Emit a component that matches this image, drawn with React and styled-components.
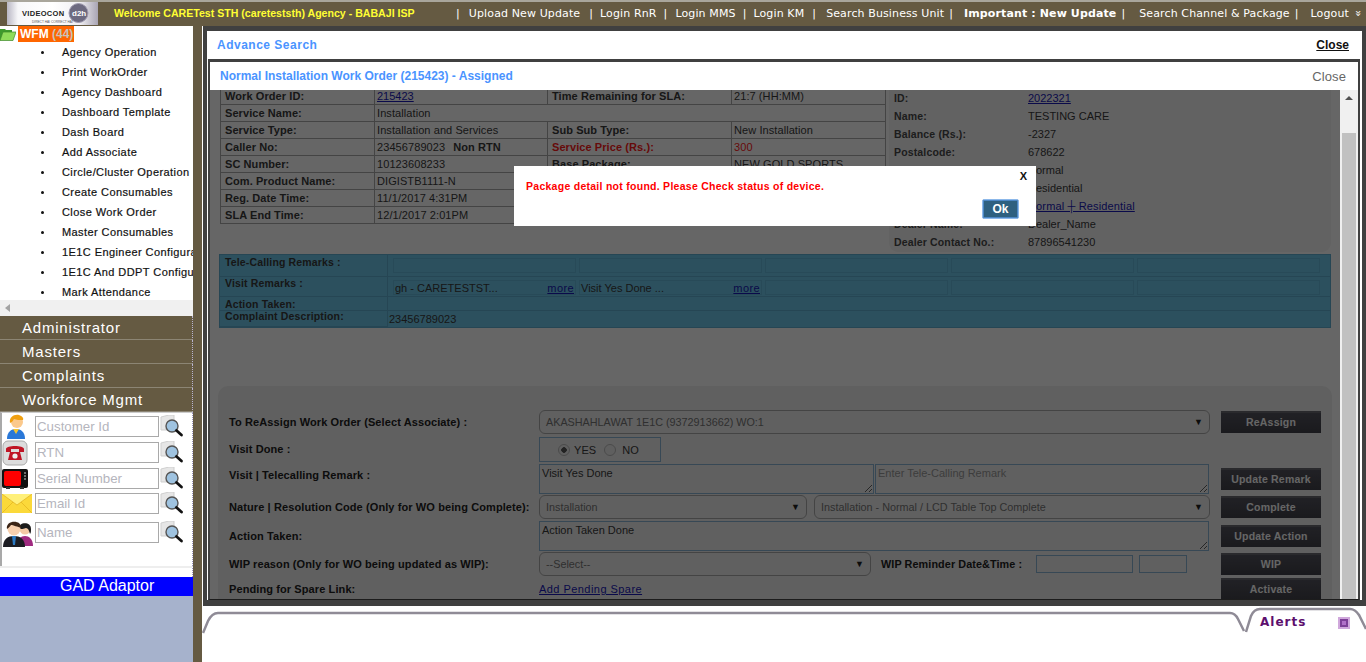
import styled, { createGlobalStyle } from "styled-components";

const GlobalStyle = createGlobalStyle`
  html, body {
    margin: 0;
    padding: 0;
    height: 100%;
    overflow: hidden;
    background: #fff;
  }
  * {
    box-sizing: border-box;
  }
`

const BROWN = "#655a42";
const ARIAL = `"Liberation Sans", Arial, sans-serif`;

const Page = styled.div`
  width: 1366px;
  height: 662px;
  display: flex;
  flex-direction: column;
  overflow: hidden;
  font-family: ${ARIAL};
  font-size: 11px;
  background: ${BROWN};
`

/* top bar */
const TopBar = styled.div`
  height: 26px;
  flex: none;
  display: flex;
  align-items: center;
  background: ${BROWN};
  border-top: 2px solid #a9a69c;
  padding: 0 0 2px 7px;
  color: #fff;
`

const Logo = styled.div`
  width: 91px;
  height: 23px;
  flex: none;
  margin-top: 1px;
  background: linear-gradient(90deg, #b9b7c4 0%, #f7f7f9 12%, #fff 50%, #f0eff3 80%, #a9a5b4 100%);
`

const Welcome = styled.div`
  margin-left: 16px;
  color: #ffff33;
  font-weight: bold;
  font-size: 10.6px;
  white-space: nowrap;
  width: 342px;
`

const Nav = styled.div`
  display: flex;
  align-items: center;
  font-family: "DejaVu Sans", sans-serif;
  font-size: 11px;
  letter-spacing: 0.12px;
  white-space: nowrap;
`

const NavItem = styled.span`
  margin-left: ${(p) => p.$left}px;
  font-weight: ${(p) => (p.$bold ? "bold" : "normal")};
  transform: ${(p) => (p.$turn ? "rotate(90deg)" : "none")};
`

/* body */
const Body = styled.div`
  flex: 1;
  min-height: 0;
  display: flex;
`

const Sidebar = styled.div`
  width: 193px;
  flex: none;
  display: flex;
  flex-direction: column;
  background: #a6b2cc;
`

const TreeHead = styled.div`
  height: 16px;
  flex: none;
  display: flex;
  align-items: center;
  background: #fff;
`

const WfmTag = styled.span`
  margin-left: 2px;
  width: 56px;
  height: 16px;
  line-height: 16px;
  padding-left: 2px;
  background: #ff6600;
  color: #fff;
  font-weight: bold;
  font-size: 12px;
`

const WfmCount = styled.span`
  color: #c9c2b8;
`

const TreeList = styled.ul`
  margin: 0;
  padding: 0;
  height: 258px;
  background: #fff;
  overflow: hidden;
  list-style: none;
  flex: none;
`

const TreeItem = styled.li`
  height: 20px;
  line-height: 20px;
  display: flex;
  white-space: nowrap;
  color: #111;
  font-size: 11px;
  letter-spacing: 0.42px;
  -webkit-text-stroke: 0.2px #111;
  &::before {
    content: "";
    flex: none;
    width: 3px;
    height: 3px;
    margin: 9px 18px 0 41px;
    border-radius: 50%;
    background: #111;
  }
`

const HScroll = styled.div`
  height: 16px;
  flex: none;
  display: flex;
  align-items: center;
  padding-left: 5px;
  background: #f0f0f0;
  &::before {
    content: "";
    border-style: solid;
    border-width: 4px 5px 4px 0;
    border-color: transparent #a3a3a3 transparent transparent;
  }
`

const AccordionHead = styled.div`
  height: 24px;
  flex: none;
  padding-left: 22px;
  line-height: 23px;
  background: ${BROWN};
  color: #fff;
  font-size: 15px;
  letter-spacing: 0.8px;
  border-bottom: 1px solid #8c8574;
  border-right: 1px dotted #b9b4d0;
  &:last-of-type {
    border-bottom: none;
  }
`

const SearchBox = styled.div`
  height: 154px;
  flex: none;
  padding-top: 3px;
  display: flex;
  flex-direction: column;
  gap: 5px;
  background: #fff;
  border-left: 2px solid #a9a9a9;
  border-right: 1px dotted #9a94c0;
  border-top: 1px solid #ccc;
`

const SearchRow = styled.div`
  height: 21px;
  display: flex;
  align-items: center;
  margin-top: ${(p) => p.$shift || 0}px;
`

const SearchIconCell = styled.div`
  width: 33px;
  flex: none;
  display: flex;
  padding-left: ${(p) => p.$pad || 0}px;
`

const SearchInput = styled.input`
  width: 124px;
  height: 21px;
  padding: 0 1px;
  border: 1px solid #a9a9a9;
  outline: none;
  font-family: ${ARIAL};
  font-size: 13.3px;
  &::placeholder {
    color: #b5b5bd;
    opacity: 1;
  }
`

const LensCell = styled.div`
  margin-left: 1px;
  width: 24px;
  height: 24px;
  flex: none;
`

const SearchFoot = styled.div`
  height: 11px;
  flex: none;
  background: #fff;
  border-top: 2px solid #eee;
  border-right: 1px dotted #9a94c0;
`

const GadBar = styled.div`
  height: 19px;
  flex: none;
  background: #0000ff;
  color: #fff;
  font-size: 16px;
  line-height: 18px;
  padding-left: 60px;
`

const Gutter = styled.div`
  width: 9px;
  flex: none;
  background: ${BROWN};
`

const Main = styled.div`
  flex: 1;
  min-width: 0;
  display: flex;
  flex-direction: column;
  background: #fff;
  padding-left: 1px;
`

const DarkArea = styled.div`
  height: 580px;
  flex: none;
  background: #404040;
  padding: 5px 4px 6px 4px;
`

const OuterPanel = styled.div`
  height: 569px;
  display: flex;
  flex-direction: column;
  background: #fff;
`

const OuterHead = styled.div`
  height: 28px;
  flex: none;
  display: flex;
  align-items: center;
  justify-content: space-between;
  padding: 0 13px 0 10px;
`

const BlueTitle = styled.span`
  color: #4a94ff;
  font-weight: bold;
  font-size: 12px;
  letter-spacing: ${(p) => p.$track}px;
`

const CloseLink = styled.a`
  color: #111;
  font-weight: bold;
  font-size: 12px;
  text-decoration: underline;
`

const Frame = styled.div`
  flex: 1;
  min-height: 0;
  margin: 0 2px 0 1px;
  display: flex;
  flex-direction: column;
  border: solid #404040;
  border-width: 3px 2px 1px 2px;
  border-bottom-color: #1c1c1c;
`

const FrameHead = styled.div`
  height: 28px;
  flex: none;
  display: flex;
  align-items: center;
  justify-content: space-between;
  padding: 0 12px 0 10px;
  background: #fff;
`

const GreyClose = styled.span`
  color: #666;
  font-size: 13px;
  letter-spacing: 0.1px;
`

const ScrollRow = styled.div`
  flex: 1;
  min-height: 0;
  display: flex;
`

const Pane = styled.div`
  position: relative;
  width: 1130px;
  flex: none;
  overflow: hidden;
  background: #fff;
`

const Dim = styled.div`
  position: absolute;
  inset: 0;
  background: rgba(0, 0, 0, 0.6);
`

const Modal = styled.div`
  position: absolute;
  left: 304px;
  top: 76px;
  width: 522px;
  height: 60px;
  background: #fff;
  padding: 14px 12px;
`

const ModalText = styled.div`
  color: #ff0000;
  font-weight: bold;
  font-size: 10.5px;
  letter-spacing: 0.27px;
`

const ModalX = styled.span`
  position: absolute;
  right: 9px;
  top: 4px;
  font-weight: bold;
  font-size: 11px;
  color: #111;
`

const OkButton = styled.button`
  position: absolute;
  left: 468px;
  top: 33px;
  width: 37px;
  height: 20px;
  padding: 0;
  background: #2e6080;
  border: 1px solid #8cb8ea;
  border-radius: 2px;
  box-shadow: inset 0 0 0 1px #4b86c4;
  color: #fff;
  font-family: ${ARIAL};
  font-weight: bold;
  font-size: 12px;
`

const Content = styled.div`
  margin-top: -3px;
`

const TopSection = styled.div`
  display: flex;
  align-items: flex-start;
  padding-left: 10px;
  gap: 3px;
`

const InfoTable = styled.table`
  width: 665px;
  border-collapse: collapse;
  table-layout: fixed;
  font-size: 11px;
  color: #3a3a3a;
  letter-spacing: 0.08px;
`

const Td = styled.td`
  height: 17px;
  padding: 0 0 0 ${(p) => (p.$label ? 4 : 2)}px;
  border: 1px solid #aaa;
  font-weight: ${(p) => (p.$label ? "bold" : "normal")};
  color: ${(p) => (p.$red ? "#ff1a1a" : "inherit")};
  white-space: nowrap;
  overflow: hidden;
`

const Strong = styled.b`
  margin-left: 8px;
`

const BlueLink = styled.a`
  color: #1a1ab8;
  text-decoration: underline;
  letter-spacing: ${(p) => p.$track || 0}px;
`

const CustomerPanel = styled.div`
  width: 442px;
  height: 165px;
  padding: 2px 0 0 5px;
  background: #f5f5f5;
  border-radius: 0 0 9px 9px;
  font-size: 11px;
  color: #3a3a3a;
`

const CustomerRow = styled.div`
  height: 18px;
  display: flex;
  align-items: center;
`

const CustomerLabel = styled.span`
  width: 134px;
  flex: none;
  font-weight: bold;
  color: #4a4a4a;
  font-size: 10.5px;
  letter-spacing: 0.15px;
`

const TealTable = styled.div`
  margin: 2px 0 0 9px;
  width: 1112px;
  height: 74px;
  background: #6ec8ea;
  border: 1px solid #5fb0d2;
  display: grid;
  grid-template-columns: 168px 1fr;
  grid-template-rows: 22px 20px 14px 16px;
  font-size: 11px;
  color: #3a3a3a;
`

const TealLabel = styled.div`
  padding-left: 5px;
  font-weight: bold;
  font-size: 10.5px;
  letter-spacing: 0.15px;
  border-right: 1px solid #5fb0d2;
  border-bottom: 1px solid #5fb0d2;
  line-height: ${(p) => p.$lh}px;
`

const TealCells = styled.div`
  padding: 3px 0 0 5px;
  display: grid;
  grid-template-columns: repeat(5, 183px);
  column-gap: 3px;
  border-bottom: 1px solid #5fb0d2;
`

const TealCell = styled.div`
  height: 15px;
  border: 1px solid #64b8dc;
  display: flex;
  justify-content: space-between;
  align-items: center;
  padding: 0 1px;
`

const TealPlain = styled.div`
  border-bottom: 1px solid ${(p) => (p.$last ? "transparent" : "#5fb0d2")};
  padding: 1px 0 0 1px;
  line-height: 14px;
`

const FormPanel = styled.div`
  margin: 58px 0 0 8px;
  width: 1114px;
  padding: 24px 0 0 11px;
  height: 240px;
  background: #f0f0f0;
  border-radius: 10px 10px 0 0;
  display: flex;
  gap: 11px;
`

const FormGrid = styled.div`
  width: 981px;
  flex: none;
  display: grid;
  grid-template-columns: 310px 1fr;
  grid-template-rows: 27px 27px 31px 26px 31px 28px 18px;
  color: #222;
  font-size: 11px;
  letter-spacing: 0.1px;
`

const FormLabel = styled.div`
  font-weight: bold;
  line-height: ${(p) => p.$lh}px;
  white-space: nowrap;
`

const FieldRow = styled.div`
  display: flex;
  align-items: ${(p) => (p.$center ? "center" : "flex-start")};
  gap: ${(p) => p.$gap || 0}px;
`

const SelectBox = styled.div`
  width: ${(p) => p.$w}px;
  height: 24px;
  flex: none;
  display: flex;
  align-items: center;
  justify-content: space-between;
  padding: 0 6px;
  margin-left: ${(p) => p.$left || 0}px;
  border: 1px solid #aaa;
  border-radius: 6px;
  background: #f0f0f0;
  color: #777;
  letter-spacing: 0;
  font-size: 10.8px;
`

const Caret = styled.span`
  color: #222;
  font-size: 9px;
`

const RadioBox = styled.div`
  width: 122px;
  height: 25px;
  display: flex;
  align-items: center;
  padding-left: 18px;
  border: 1px solid #8ab4d4;
  color: #3a3a3a;
`

const Radio = styled.input`
  appearance: none;
  margin: 0 ${(p) => p.$right || 4}px 0 0;
  width: 12px;
  height: 12px;
  border-radius: 50%;
  border: 1px solid #bbb;
  background: #eee;
  &:checked {
    background: radial-gradient(circle, #555 0 2.5px, #eee 3px);
  }
`

const RadioText = styled.span`
  margin-right: ${(p) => p.$right || 0}px;
`

const Area = styled.textarea`
  width: ${(p) => p.$w}px;
  height: 30px;
  flex: none;
  padding: 2px;
  margin: 0;
  border: 1px solid #8ab4d4;
  background: #f0f0f0;
  outline: none;
  font-family: ${ARIAL};
  font-size: 11px;
  color: #3a3a3a;
  &::placeholder {
    color: #999;
    opacity: 1;
  }
`

const WipLabel = styled.span`
  margin: 0 14px 0 10px;
  font-weight: bold;
  line-height: 24px;
  font-size: 10.8px;
  white-space: nowrap;
`

const DateInput = styled.input`
  width: ${(p) => p.$w}px;
  height: 18px;
  margin: 3px 6px 0 0;
  border: 1px solid #8ab4d4;
  background: #f0f0f0;
  outline: none;
`

const ButtonColumn = styled.div`
  width: 100px;
  flex: none;
  padding-top: 1px;
  display: flex;
  flex-direction: column;
`

const ActionButton = styled.button`
  width: 100px;
  height: 22px;
  flex: none;
  margin-top: ${(p) => p.$top || 0}px;
  padding: 0;
  border: none;
  box-shadow: inset 0 2px 0 #6a6a70;
  background: linear-gradient(#55555f, #42424a);
  color: #fff;
  font-family: ${ARIAL};
  font-weight: bold;
  font-size: 10.5px;
  letter-spacing: 0.2px;
`

const VScroll = styled.div`
  width: 18px;
  flex: none;
  display: flex;
  flex-direction: column;
  align-items: center;
  background: #f0f0f0;
`

const Arrow = styled.div`
  height: 16px;
  flex: none;
  display: flex;
  align-items: center;
  margin-top: ${(p) => p.$top || 0}px;
  &::before {
    content: "";
    border-style: solid;
    border-color: transparent;
    border-width: ${(p) => (p.$up ? "0 4px 4px 4px" : "4px 4px 0 4px")};
    border-bottom-color: ${(p) => (p.$up ? "#505050" : "transparent")};
    border-top-color: ${(p) => (p.$up ? "transparent" : "#505050")};
  }
`

const Thumb = styled.div`
  width: 14px;
  height: 466px;
  margin-top: 27px;
  flex: none;
  background: #c1c1c1;
`

/* footer tabs */
const Footer = styled.div`
  position: relative;
  flex: 1;
  background: #fff;
  margin-left: -1px;
`

const TabLine = styled.svg`
  display: block;
`

const AlertText = styled.span`
  position: absolute;
  left: 1058px;
  top: 9px;
  color: #5d0f6d;
  font-family: "DejaVu Sans", sans-serif;
  font-weight: bold;
  font-size: 12px;
  letter-spacing: 1px;
`

const AlertIcon = styled.span`
  position: absolute;
  left: 1136px;
  top: 11px;
  width: 12px;
  height: 12px;
  background: #b070c8;
  border: 2px solid #d0a8dc;
  box-shadow: inset 0 0 0 2px #7d3f98;
`

const menuItems = [
  "Agency Operation",
  "Print WorkOrder",
  "Agency Dashboard",
  "Dashboard Template",
  "Dash Board",
  "Add Associate",
  "Circle/Cluster Operation",
  "Create Consumables",
  "Close Work Order",
  "Master Consumables",
  "1E1C Engineer Configuration",
  "1E1C And DDPT Configuration",
  "Mark Attendance",
];

const navItems = [
  { text: "|", left: 0 },
  { text: "Upload New Update", left: 9 },
  { text: "|", left: 9 },
  { text: "Login RnR", left: 7 },
  { text: "|", left: 7 },
  { text: "Login MMS", left: 8 },
  { text: "|", left: 7 },
  { text: "Login KM", left: 7 },
  { text: "|", left: 8 },
  { text: "Search Business Unit", left: 10 },
  { text: "|", left: 5 },
  { text: "Important : New Update", left: 11, bold: true },
  { text: "|", left: 5 },
  { text: "Search Channel & Package", left: 14 },
  { text: "|", left: 5 },
  { text: "Logout", left: 12 },
  { text: "»", left: 6, turn: true },
];

const LogoArt = () => (
  <Logo>
    <svg width="91" height="23" viewBox="0 0 91 23">
      <text x="15" y="14" fontFamily="Liberation Sans" fontSize="7.5" fontWeight="bold" letterSpacing="0.3" fill="#222">VIDEOCON</text>
      <circle cx="71.5" cy="11" r="9.5" fill="#6d6a80" stroke="#a09cb0" />
      <text x="65" y="14" fontFamily="Liberation Sans" fontSize="8" fontWeight="bold" fill="#fff">d2h</text>
      <text x="25" y="21" fontFamily="Liberation Sans" fontSize="3.2" fill="#555">DIRECT HAI CORRECT HAI</text>
    </svg>
  </Logo>
);

const FolderIcon = () => (
  <svg width="16" height="14" viewBox="0 0 16 14">
    <path d="M0 2h5l1 1h6v3H3L1 13H0z" fill="#3e9a2c" />
    <path d="M3 5h13l-3 8.5H0z" fill="#8fdc5a" stroke="#3e8a2a" strokeWidth="0.7" />
  </svg>
);

const CustomerIcon = () => (
  <svg width="24" height="26" viewBox="0 0 24 26">
    <path d="M3 25c0-7 4-10 9-10s9 3 9 10z" fill="#2a78d8" />
    <path d="M9 15l3 5 3-5z" fill="#f4c430" />
    <circle cx="13" cy="8" r="6" fill="#fbc98c" />
    <path d="M6 9c-1-6 4-9 9-8 3 1 5 3 4 5-3 0-7 0-9-1-1 2-2 3-4 4z" fill="#f0a010" />
  </svg>
);

const PhoneIcon = () => (
  <svg width="26" height="26" viewBox="0 0 26 26">
    <rect x="1" y="1" width="24" height="24" rx="5" fill="#dcdcdc" stroke="#aaa" />
    <path d="M4 9c0-4 18-4 18 0v3h-5V9H9v3H4z" fill="#c01525" />
    <path d="M8 12h10l2 8H6z" fill="#c01525" />
    <circle cx="13" cy="16" r="2.6" fill="#eee" />
  </svg>
);

const TvIcon = () => (
  <svg width="27" height="22" viewBox="0 0 27 22">
    <rect x="0" y="1" width="26" height="19" rx="2" fill="#111" />
    <rect x="2" y="3" width="17" height="15" rx="2" fill="#ff0000" />
    <path d="M22 5h2M22 8h2M22 11h2" stroke="#ccc" />
    <path d="M4 20h4M18 20h4" stroke="#333" strokeWidth="2" />
  </svg>
);

const MailIcon = () => (
  <svg width="30" height="19" viewBox="0 0 30 19">
    <rect width="30" height="19" fill="#fbd93a" />
    <path d="M0 0l15 11L30 0" fill="#fff07a" stroke="#e0b020" strokeWidth="0.7" />
    <path d="M0 19l11-11M30 19L19 8" stroke="#e6b820" strokeWidth="0.8" />
  </svg>
);

const PeopleIcon = () => (
  <svg width="32" height="30" viewBox="0 0 32 30">
    <circle cx="23" cy="11" r="5.5" fill="#f3c9a5" />
    <path d="M17 11c-1-7 12-8 12 0 0 2 0 4-1 5-1-4-2-6-4-6-2 1-5 1-7 1z" fill="#1c1c1c" />
    <path d="M15 28c0-7 4-10 8-10s8 3 8 10z" fill="#a02a80" />
    <circle cx="12" cy="11" r="6.5" fill="#f6cfae" />
    <path d="M5 11C3 2 20 1 19 10c-3-1-8-3-10-3-1 1-2 3-4 4z" fill="#3a2416" />
    <path d="M1 29c0-8 5-11 11-11s11 3 11 11z" fill="#1c1c22" />
    <path d="M10 18h4l-1 9h-2z" fill="#2b79c2" />
  </svg>
);

const LensIcon = () => (
  <svg width="24" height="24" viewBox="0 0 24 24">
    <path d="M1 2l8-2h5v15H1z" fill="#e6e6e6" stroke="#cfcfcf" />
    <circle cx="12" cy="11" r="6" fill="#9fc3e0" stroke="#555" strokeWidth="1.4" />
    <path d="M16.5 15.5l5 4.5" stroke="#111" strokeWidth="2.8" strokeLinecap="round" />
  </svg>
);

const searchRows = [
  { icon: <CustomerIcon />, placeholder: "Customer Id", pad: 2 },
  { icon: <PhoneIcon />, placeholder: "RTN" },
  { icon: <TvIcon />, placeholder: "Serial Number" },
  { icon: <MailIcon />, placeholder: "Email Id", shift: -1 },
  { icon: <PeopleIcon />, placeholder: "Name", shift: 3 },
];

const customerRows = [
  { label: "ID:", value: <BlueLink>2022321</BlueLink> },
  { label: "Name:", value: "TESTING CARE" },
  { label: "Balance (Rs.):", value: "-2327" },
  { label: "Postalcode:", value: "678622" },
  { label: "Customer Type:", value: "Normal" },
  { label: "Category:", value: "Residential" },
  { label: "Sub Category:", value: <BlueLink $track={0.15}>Normal ┼ Residential</BlueLink> },
  { label: "Dealer Name:", value: "Dealer_Name" },
  { label: "Dealer Contact No.:", value: "87896541230" },
];

const App = () => {
  return (
    <Page>
      <GlobalStyle />
      <TopBar>
        <LogoArt />
        <Welcome>Welcome CARETest STH (careteststh) Agency - BABAJI ISP</Welcome>
        <Nav>
          {navItems.map((item, i) => (
            <NavItem key={i} $left={item.left} $bold={item.bold} $turn={item.turn}>{item.text}</NavItem>
          ))}
        </Nav>
      </TopBar>
      <Body>
        <Sidebar>
          <TreeHead>
            <FolderIcon />
            <WfmTag>WFM <WfmCount>(44)</WfmCount></WfmTag>
          </TreeHead>
          <TreeList>
            {menuItems.map((name) => (
              <TreeItem key={name}>{name}</TreeItem>
            ))}
          </TreeList>
          <HScroll />
          <AccordionHead>Administrator</AccordionHead>
          <AccordionHead>Masters</AccordionHead>
          <AccordionHead>Complaints</AccordionHead>
          <AccordionHead>Workforce Mgmt</AccordionHead>
          <SearchBox>
            {searchRows.map((row) => (
              <SearchRow key={row.placeholder} $shift={row.shift}>
                <SearchIconCell $pad={row.pad}>{row.icon}</SearchIconCell>
                <SearchInput placeholder={row.placeholder} />
                <LensCell><LensIcon /></LensCell>
              </SearchRow>
            ))}
          </SearchBox>
          <SearchFoot />
          <GadBar>GAD Adaptor</GadBar>
        </Sidebar>
        <Gutter />
        <Main>
          <DarkArea>
            <OuterPanel>
              <OuterHead>
                <BlueTitle $track={0.5}>Advance Search</BlueTitle>
                <CloseLink>Close</CloseLink>
              </OuterHead>
              <Frame>
                <FrameHead>
                  <BlueTitle $track={0}>Normal Installation Work Order (215423) - Assigned</BlueTitle>
                  <GreyClose>Close</GreyClose>
                </FrameHead>
                <ScrollRow>
                  <Pane>
                    <Content>
                      <TopSection>
                        <InfoTable>
                          <colgroup>
                            <col width="154" />
                            <col width="173" />
                            <col width="184" />
                            <col width="154" />
                          </colgroup>
                          <tbody>
                            <tr>
                              <Td $label>Work Order ID:</Td>
                              <Td><BlueLink>215423</BlueLink></Td>
                              <Td $label>Time Remaining for SLA:</Td>
                              <Td>21:7 (HH:MM)</Td>
                            </tr>
                            <tr>
                              <Td $label>Service Name:</Td>
                              <Td colSpan={3}>Installation</Td>
                            </tr>
                            <tr>
                              <Td $label>Service Type:</Td>
                              <Td>Installation and Services</Td>
                              <Td $label>Sub Sub Type:</Td>
                              <Td>New Installation</Td>
                            </tr>
                            <tr>
                              <Td $label>Caller No:</Td>
                              <Td>23456789023<Strong>Non RTN</Strong></Td>
                              <Td $label $red>Service Price (Rs.):</Td>
                              <Td $red>300</Td>
                            </tr>
                            <tr>
                              <Td $label>SC Number:</Td>
                              <Td>10123608233</Td>
                              <Td $label>Base Package:</Td>
                              <Td>NEW GOLD SPORTS</Td>
                            </tr>
                            <tr>
                              <Td $label>Com. Product Name:</Td>
                              <Td>DIGISTB1111-N</Td>
                              <Td />
                              <Td />
                            </tr>
                            <tr>
                              <Td $label>Reg. Date Time:</Td>
                              <Td>11/1/2017 4:31PM</Td>
                              <Td />
                              <Td />
                            </tr>
                            <tr>
                              <Td $label>SLA End Time:</Td>
                              <Td>12/1/2017 2:01PM</Td>
                              <Td />
                              <Td />
                            </tr>
                          </tbody>
                        </InfoTable>
                        <CustomerPanel>
                          {customerRows.map((row) => (
                            <CustomerRow key={row.label}>
                              <CustomerLabel>{row.label}</CustomerLabel>
                              <span>{row.value}</span>
                            </CustomerRow>
                          ))}
                        </CustomerPanel>
                      </TopSection>
                      <TealTable>
                        <TealLabel $lh={15}>Tele-Calling Remarks :</TealLabel>
                        <TealCells>
                          <TealCell /><TealCell /><TealCell /><TealCell /><TealCell />
                        </TealCells>
                        <TealLabel $lh={13}>Visit Remarks :</TealLabel>
                        <TealCells>
                          <TealCell>gh - CARETESTST...<BlueLink $track={0.4}>more</BlueLink></TealCell>
                          <TealCell>Visit Yes Done ...<BlueLink $track={0.4}>more</BlueLink></TealCell>
                          <TealCell /><TealCell /><TealCell />
                        </TealCells>
                        <TealLabel $lh={14}>Action Taken:</TealLabel>
                        <TealPlain />
                        <TealLabel $lh={11}>Complaint Description:</TealLabel>
                        <TealPlain $last>23456789023</TealPlain>
                      </TealTable>
                      <FormPanel>
                        <FormGrid>
                          <FormLabel $lh={24}>To ReAssign Work Order (Select Associate) :</FormLabel>
                          <FieldRow>
                            <SelectBox $w={671}>AKASHAHLAWAT 1E1C (9372913662) WO:1<Caret>▼</Caret></SelectBox>
                          </FieldRow>
                          <FormLabel $lh={24}>Visit Done :</FormLabel>
                          <FieldRow>
                            <RadioBox>
                              <Radio type="radio" name="visit" defaultChecked />
                              <RadioText $right={8}>YES</RadioText>
                              <Radio type="radio" name="visit" $right={6} />
                              <RadioText>NO</RadioText>
                            </RadioBox>
                          </FieldRow>
                          <FormLabel $lh={22}>Visit | Telecalling Remark :</FormLabel>
                          <FieldRow $gap={1}>
                            <Area $w={335} defaultValue="Visit Yes Done" />
                            <Area $w={334} placeholder="Enter Tele-Calling Remark" />
                          </FieldRow>
                          <FormLabel $lh={24}>Nature | Resolution Code (Only for WO being Complete):</FormLabel>
                          <FieldRow>
                            <SelectBox $w={268}>Installation<Caret>▼</Caret></SelectBox>
                            <SelectBox $w={396} $left={7}>Installation - Normal / LCD Table Top Complete<Caret>▼</Caret></SelectBox>
                          </FieldRow>
                          <FormLabel $lh={30}>Action Taken:</FormLabel>
                          <FieldRow>
                            <Area $w={670} defaultValue="Action Taken Done" />
                          </FieldRow>
                          <FormLabel $lh={24}>WIP reason (Only for WO being updated as WIP):</FormLabel>
                          <FieldRow>
                            <SelectBox $w={332}>--Select--<Caret>▼</Caret></SelectBox>
                            <WipLabel>WIP Reminder Date&amp;Time :</WipLabel>
                            <DateInput $w={97} />
                            <DateInput $w={48} />
                          </FieldRow>
                          <FormLabel $lh={18}>Pending for Spare Link:</FormLabel>
                          <FieldRow $center>
                            <BlueLink $track={0.45}>Add Pending Spare</BlueLink>
                          </FieldRow>
                        </FormGrid>
                        <ButtonColumn>
                          <ActionButton>ReAssign</ActionButton>
                          <ActionButton $top={35}>Update Remark</ActionButton>
                          <ActionButton $top={6}>Complete</ActionButton>
                          <ActionButton $top={7}>Update Action</ActionButton>
                          <ActionButton $top={6}>WIP</ActionButton>
                          <ActionButton $top={3}>Activate</ActionButton>
                        </ButtonColumn>
                      </FormPanel>
                    </Content>
                    <Dim />
                    <Modal>
                      <ModalText>Package detail not found. Please Check status of device.</ModalText>
                      <ModalX>X</ModalX>
                      <OkButton>Ok</OkButton>
                    </Modal>
                  </Pane>
                  <VScroll>
                    <Arrow $up />
                    <Thumb />
                    <Arrow $top={1} />
                  </VScroll>
                </ScrollRow>
              </Frame>
            </OuterPanel>
          </DarkArea>
          <Footer>
            <TabLine width="1164" height="56" viewBox="0 0 1164 56">
              <g fill="none" stroke="#8f8b96" strokeWidth="2.5">
                <path d="M1 27L6 15Q10 7 16 7L1028 7Q1033 7 1036 13L1042 25" />
                <path d="M1044 26L1049 10Q1052 3 1058 3L1148 3Q1153 3 1157 9L1164 23" />
              </g>
            </TabLine>
            <AlertText>Alerts</AlertText>
            <AlertIcon />
          </Footer>
        </Main>
      </Body>
    </Page>
  )
}

export default App
